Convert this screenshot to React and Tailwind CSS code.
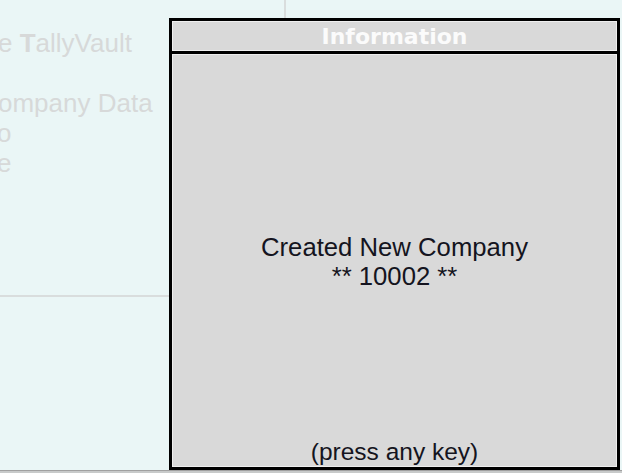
export default function App() {
  const arial = { fontFamily: '"Liberation Sans", Arial, sans-serif' };
  return (
    <div className="relative w-[622px] h-[473px] overflow-hidden bg-[#eaf6f6] flex flex-col" style={arial}>
      <div className="flex-1 flex">
        <div className="w-[286px] border-r-2 border-[#d9dddd] flex flex-col">
          <div className="h-[297px] border-b-2 border-[#d9dddd] pt-[28px] text-[26px] leading-[30px] text-[#d7d9d9] whitespace-nowrap">
            <div className="-ml-[2px]">
              e <span className="font-bold">T</span>allyVault
            </div>
            <div>&nbsp;</div>
            <div className="-ml-[2px]">ompany Data</div>
            <div className="-ml-[3px]">o</div>
            <div className="-ml-[3px]">e</div>
          </div>
        </div>
        <div className="flex-1" />
      </div>
      <div className="h-[3px] bg-[#c8caca] border-t border-[#a0a0a0]" />

      <div className="absolute left-[169px] top-[18px] w-[451px] h-[452px] border-[3px] border-black bg-[#d9d9d9] flex flex-col">
        <div
          className="h-[30px] border border-[#efefef] pt-[1px] text-center text-[22px] leading-[27px] font-bold text-[#fbfbfb]"
          style={{ fontFamily: '"DejaVu Sans", Verdana, sans-serif' }}
        >
          Information
        </div>
        <div className="h-[3px] bg-black" />
        <div className="flex-1 border border-[#eeeeee] flex flex-col items-center text-[#141420]">
          <div className="pt-[178px] text-center text-[25.7px] leading-[29px]">
            <div>Created New Company</div>
            <div>** 10002 **</div>
          </div>
          <div className="mt-auto text-[24.5px] leading-[29px]">(press any key)</div>
        </div>
      </div>
    </div>
  );
}
